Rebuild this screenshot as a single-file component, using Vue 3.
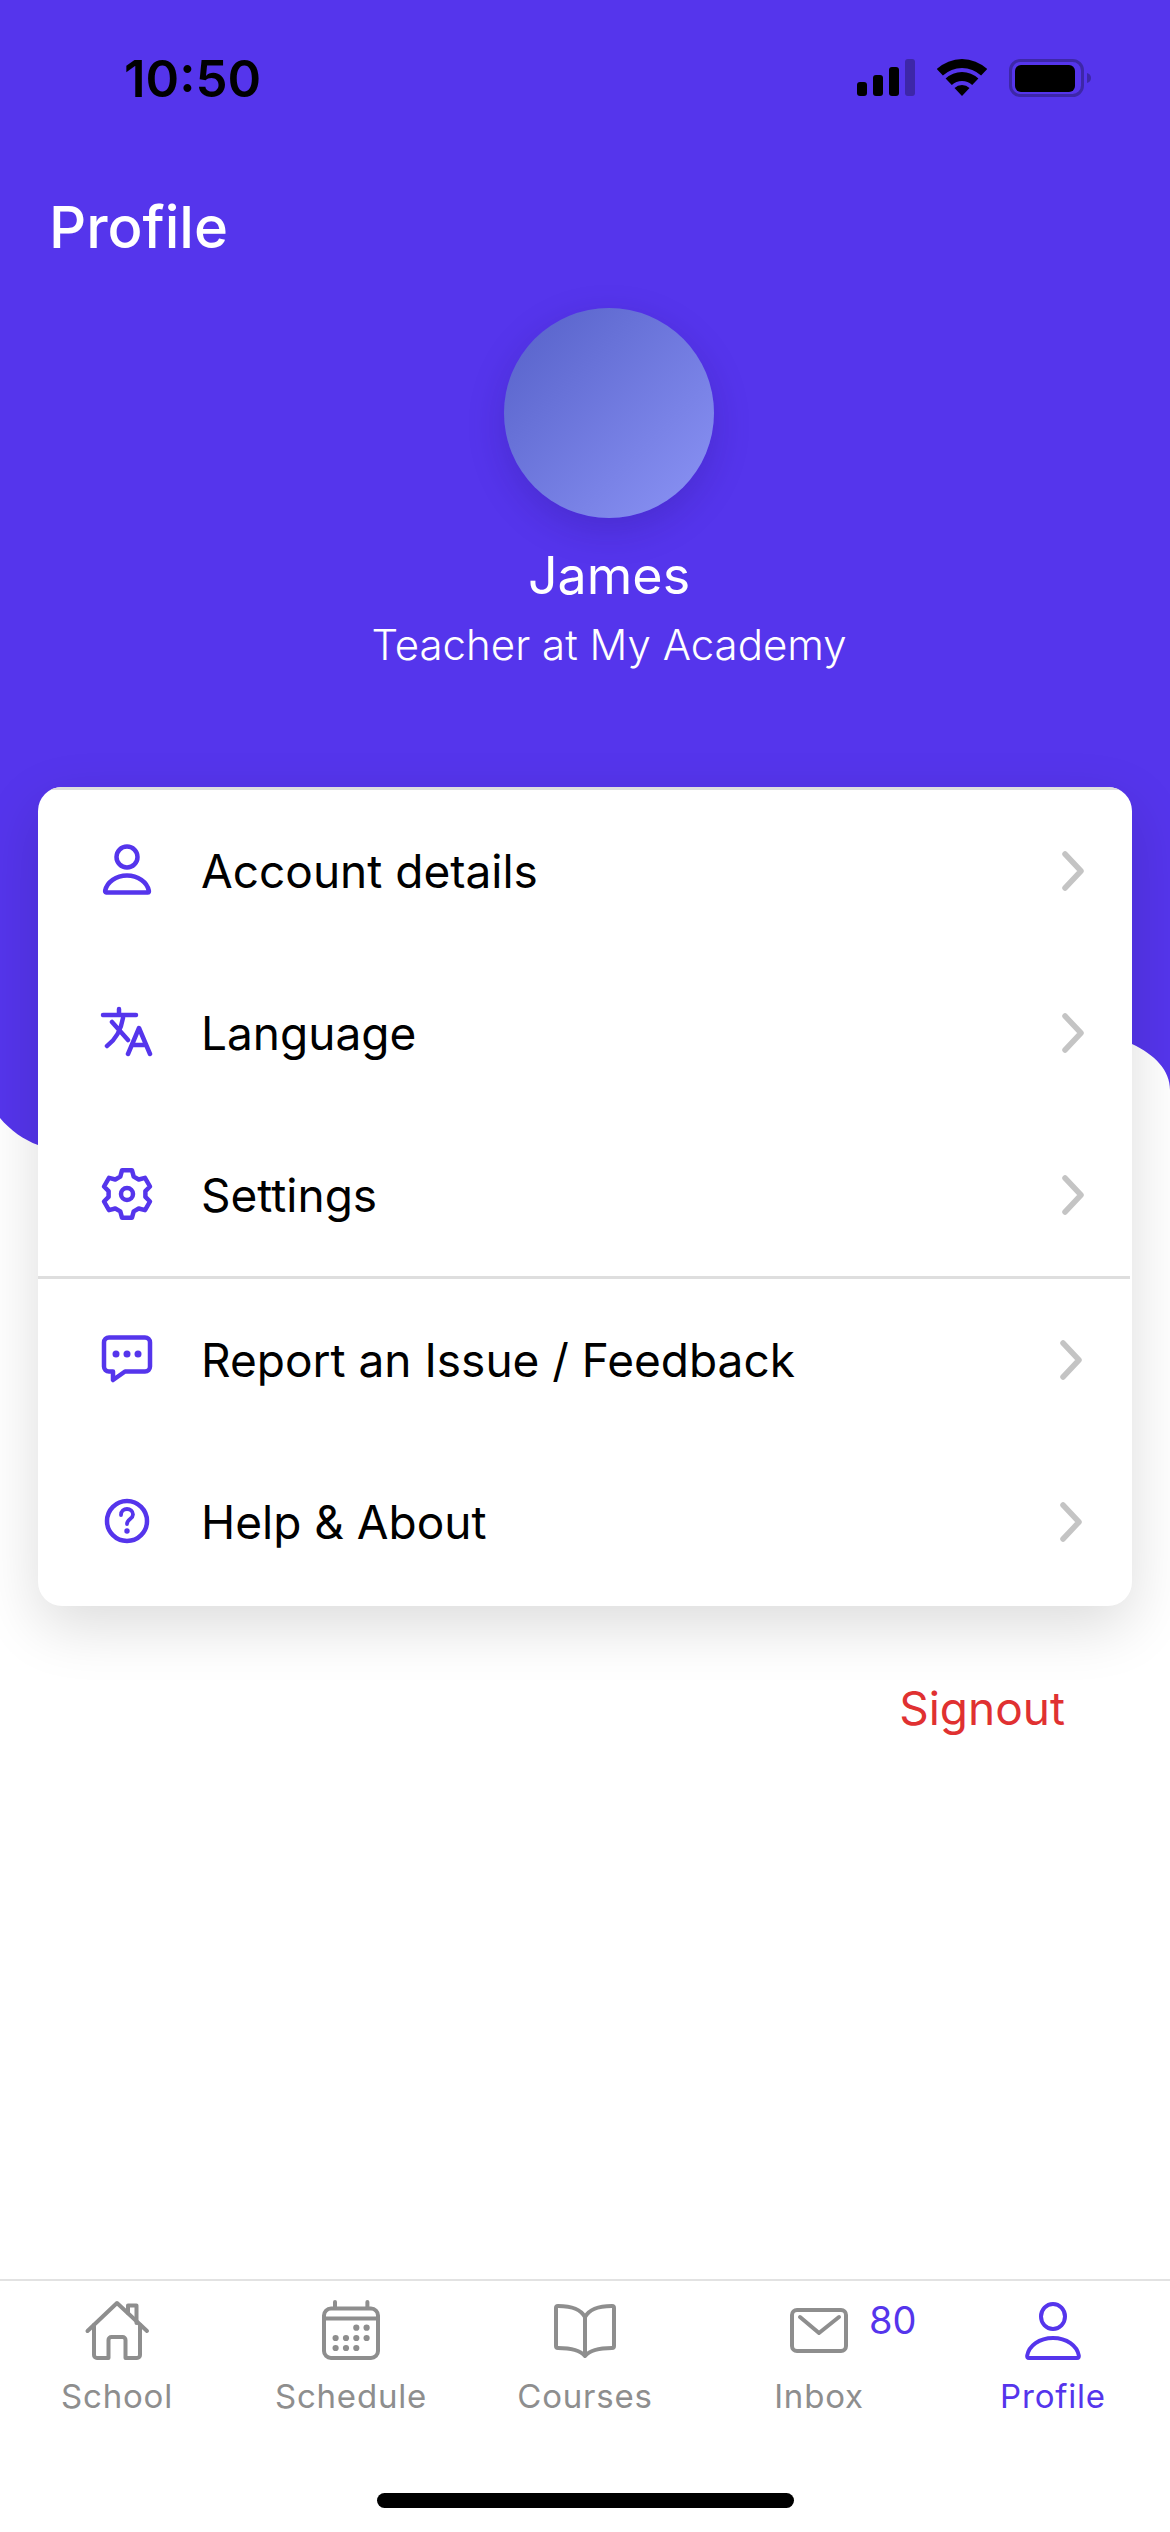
<script setup>
const menuGroups = [
  [
    { id: 'account', label: 'Account details' },
    { id: 'language', label: 'Language' },
    { id: 'settings', label: 'Settings' },
  ],
  [
    { id: 'report', label: 'Report an Issue / Feedback' },
    { id: 'help', label: 'Help & About' },
  ],
]

const tabs = [
  { id: 'school', label: 'School' },
  { id: 'schedule', label: 'Schedule' },
  { id: 'courses', label: 'Courses' },
  { id: 'inbox', label: 'Inbox', badge: 80 },
  { id: 'profile', label: 'Profile', active: true },
]

// six wide teeth, one pointing straight up
function buildGear() {
  const cx = 27
  const cy = 26
  const points = []
  for (let i = 0; i < 6; i++) {
    const a = -90 + i * 60
    const steps = [
      [-21, 18.6],
      [-12, 24.2],
      [12, 24.2],
      [21, 18.6],
    ]
    for (const [d, r] of steps) {
      const t = ((a + d) * Math.PI) / 180
      points.push(`${(cx + r * Math.cos(t)).toFixed(1)} ${(cy + r * Math.sin(t)).toFixed(1)}`)
    }
  }
  return 'M' + points.join('L') + 'Z'
}

const gearPath = buildGear()
const calendarDots = [
  [38.3, 29.7], [48.6, 29.7],
  [17.6, 40], [28, 40], [38.3, 40], [48.6, 40],
  [17.6, 50], [28, 50], [38.3, 50],
]
</script>

<template>
  <div class="screen">
    <svg class="wave" viewBox="0 0 1170 363" aria-hidden="true">
      <path d="M0 0H1170V303C1170 283 1155 268 1132 257L38 358C24 353 10 343 0 331Z" />
    </svg>

    <header class="hero">
      <div class="status-bar">
        <span class="time">10:50</span>
        <div class="status-icons">
          <svg width="58" height="37" viewBox="0 0 58 37">
            <rect x="0" y="23" width="10" height="14" rx="3" />
            <rect x="16" y="16" width="10" height="21" rx="3" />
            <rect x="32" y="8" width="10" height="29" rx="3" />
            <rect x="48" y="0" width="10" height="37" rx="3" fill="#3d27a8" />
          </svg>
          <svg width="50" height="37" viewBox="0 0 50 37">
            <path d="M-.2 10A37 37 0 0 1 50.2 10L44.1 16.5A28 28 0 0 0 5.9 16.5Z" />
            <path d="M8.6 19.5A24 24 0 0 1 41.4 19.5L35.2 26A15 15 0 0 0 14.8 26Z" />
            <path d="M17.5 29A11 11 0 0 1 32.5 29L25 37Z" />
          </svg>
          <svg width="82" height="38" viewBox="0 0 82 38">
            <rect x="1.5" y="1.5" width="72" height="35" rx="10" fill="none" stroke="#3d27a8" stroke-width="3" />
            <rect x="6" y="6" width="60" height="27" rx="6" />
            <path d="M78 14c2.500.5 4 2.500 4 5s-1.500 4.500-4 5z" fill="#3d27a8" />
          </svg>
        </div>
      </div>

      <h1 class="page-title">Profile</h1>

      <div class="user">
        <div class="avatar"></div>
        <div class="user-name">James</div>
        <div class="user-role">Teacher at My Academy</div>
      </div>
    </header>

    <section class="menu-card">
      <template v-for="(group, i) in menuGroups" :key="i">
        <div class="menu-group">
          <div v-for="item in group" :key="item.id" class="menu-row">
            <svg class="menu-icon" viewBox="0 0 54 54" fill="none">
              <template v-if="item.id === 'account'">
                <circle cx="27" cy="13" r="10.500" />
                <path d="M6 48.500h42c1 0 1-1 .8-2C47 38 38 31.500 27 31.500S7 38 5.200 46.500c-.2 1 0 2 .8 2z" />
              </template>
              <template v-else-if="item.id === 'language'">
                <path d="M3 9h33M19 3v6M12 16l16 18M23 12c-2 12-8 22-16 28M28 48l11-26 11 26M33 39h13" />
              </template>
              <template v-else-if="item.id === 'settings'">
                <path :d="gearPath" />
                <circle cx="27" cy="26" r="6" />
              </template>
              <template v-else-if="item.id === 'report'">
                <path d="M9 4.500h36a5 5 0 0 1 5 5v24a5 5 0 0 1-5 5H25L13 47v-8.500H9a5 5 0 0 1-5-5v-24a5 5 0 0 1 5-5z" />
                <circle cx="16" cy="21" r="3.500" class="dot" />
                <circle cx="27" cy="21" r="3.500" class="dot" />
                <circle cx="38" cy="21" r="3.500" class="dot" />
              </template>
              <template v-else>
                <circle cx="27" cy="26" r="20" />
                <path d="M21 20c0-4 3-6 6-6s6 2.200 6 5.500c0 4.500-6 4.500-6 9.500" class="thin" />
                <circle cx="27" cy="36" r="2.700" class="dot" />
              </template>
            </svg>
            <span class="menu-label">{{ item.label }}</span>
            <svg class="chevron" width="22" height="40" viewBox="0 0 22 40" fill="none">
              <path d="M3 3l16 17L3 37" />
            </svg>
          </div>
        </div>
      </template>
    </section>

    <button class="signout">Signout</button>

    <nav class="tab-bar">
      <div v-for="tab in tabs" :key="tab.id" class="tab" :class="{ active: tab.active }">
        <svg class="tab-icon" viewBox="0 0 66 66" fill="none">
          <template v-if="tab.id === 'school'">
            <path d="M3.500 33 33 5l30 28" />
            <path d="M10 27v30a3 3 0 0 0 3 3h11.500V42a3 3 0 0 1 3-3h11a3 3 0 0 1 3 3v18H53a3 3 0 0 0 3-3V27" />
            <path d="M44 15V7.500h8.500V25" />
          </template>
          <template v-else-if="tab.id === 'schedule'">
            <rect x="6" y="10.500" width="54" height="49.500" rx="7" />
            <path d="M6 20.500h54M17 4v6M49.400 4v6" />
            <circle v-for="(d, n) in calendarDots" :key="n" :cx="d[0]" :cy="d[1]" r="3.100" class="dot" />
          </template>
          <template v-else-if="tab.id === 'courses'">
            <path d="M33 19C29 12 22 8 6 8a2 2 0 0 0-2 2v38a2 2 0 0 0 2 2c13 0 22 2 27 8 5-6 14-8 27-8a2 2 0 0 0 2-2V10a2 2 0 0 0-2-2C44 8 37 12 33 19zM33 19v39" />
          </template>
          <template v-else-if="tab.id === 'inbox'">
            <rect x="6" y="12" width="54" height="41" rx="5" />
            <path d="M14 19l19 16 20-16" />
          </template>
          <template v-else>
            <ellipse cx="33" cy="18.500" rx="12" ry="12.500" />
            <path d="M9 60h48c1.500 0 2-1 1.800-2.500C57 48 47 40 33 40S9 48 7.200 57.500C7 59 7.500 60 9 60z" />
          </template>
        </svg>
        <span class="tab-label">{{ tab.label }}</span>
        <span v-if="tab.badge" class="tab-badge">{{ tab.badge }}</span>
      </div>
    </nav>

    <div class="home-indicator"></div>
  </div>
</template>

<style>
html,
body {
  margin: 0;
  background: #fff;
}
</style>

<style scoped>
.screen {
  position: relative;
  width: 1170px;
  height: 2532px;
  overflow: hidden;
  display: flex;
  flex-direction: column;
  background: #fff;
  font-family: Inter, 'Noto Sans', sans-serif;
}

/* the purple shape carrying on behind the card */
.wave {
  position: absolute;
  top: 787px;
  left: 0;
  width: 1170px;
  height: 363px;
}

.wave path {
  fill: #5535ec;
}

.hero {
  position: relative;
  height: 787px;
  flex-shrink: 0;
  background: #5535ec;
}

.status-bar {
  height: 118px;
  display: flex;
  align-items: flex-start;
  justify-content: space-between;
  padding: 0 79px 0 124px;
  box-sizing: border-box;
}

.time {
  margin-top: 48px;
  font-size: 51px;
  line-height: 62px;
  font-weight: 600;
  color: #000;
}

.status-icons {
  display: flex;
  gap: 22px;
  margin-top: 59px;
}

.page-title {
  margin: 75px 0 0 49px;
  font-size: 58px;
  line-height: 68px;
  font-weight: 500;
  color: #fff;
}

.user {
  display: flex;
  flex-direction: column;
  align-items: center;
  padding-left: 48px;
  margin-top: 47px;
  color: #fff;
}

.avatar {
  width: 210px;
  height: 210px;
  border-radius: 50%;
  background: linear-gradient(135deg, #5560c8, #8c94f6);
  box-shadow: 0 12px 36px rgba(30, 20, 110, 0.22);
}

.user-name {
  margin-top: 28px;
  font-size: 52px;
  line-height: 60px;
  font-weight: 400;
}

.user-role {
  margin-top: 14px;
  font-size: 42px;
  line-height: 50px;
  font-weight: 300;
}

.menu-card {
  position: relative;
  margin: 0 38px;
  padding: 3px 0;
  background: #fff;
  border-radius: 24px;
  box-shadow: 0 20px 60px rgba(0, 0, 0, 0.14);
  overflow: hidden;
}

.menu-card::before {
  content: '';
  position: absolute;
  top: 0;
  left: 0;
  right: 0;
  height: 3px;
  background: #dedede;
}

.menu-group + .menu-group {
  border-top: 3px solid #dedede;
  margin-right: 2px;
}

.menu-row {
  display: flex;
  align-items: center;
  height: 162px;
  padding: 0 48px 0 62px;
}

.menu-icon {
  width: 54px;
  height: 54px;
  flex-shrink: 0;
  overflow: visible;
}

.menu-icon * {
  stroke: #5535ec;
  stroke-width: 4.5;
  stroke-linecap: round;
  stroke-linejoin: round;
}

.menu-icon .dot {
  fill: #5535ec;
  stroke: none;
}

.menu-icon .thin {
  stroke-width: 3.8;
}

.menu-label {
  flex: 1;
  margin-left: 47px;
  font-size: 46px;
  line-height: 56px;
  color: #000;
}

.chevron path {
  stroke: #c4c4c4;
  stroke-width: 5.5;
  stroke-linecap: round;
  stroke-linejoin: round;
}

.signout {
  align-self: flex-end;
  margin: 74px 105px 0 0;
  padding: 0;
  border: 0;
  background: none;
  font-family: inherit;
  font-size: 46px;
  line-height: 56px;
  color: #e03131;
}

.tab-bar {
  margin-top: auto;
  height: 253px;
  box-sizing: border-box;
  display: grid;
  grid-template-columns: repeat(5, 234px);
  border-top: 2px solid #e2e2e2;
  padding-top: 17px;
}

.tab {
  position: relative;
  display: flex;
  flex-direction: column;
  align-items: center;
  color: #8e8e8e;
}

.tab-icon {
  width: 66px;
  height: 66px;
}

.tab-icon * {
  stroke: #8e8e8e;
  stroke-width: 4;
  stroke-linecap: round;
  stroke-linejoin: round;
}

.tab-icon .dot {
  fill: #8e8e8e;
  stroke: none;
}

.tab.active {
  color: #5535ec;
}

.tab.active .tab-icon * {
  stroke: #5535ec;
}

.tab-label {
  margin-top: 12px;
  font-size: 33px;
  line-height: 40px;
  letter-spacing: 0.8px;
}

.tab-badge {
  position: absolute;
  top: -1px;
  left: 167px;
  font-size: 38px;
  line-height: 46px;
  color: #5535ec;
}

.home-indicator {
  position: absolute;
  left: 377px;
  top: 2493px;
  width: 417px;
  height: 15px;
  border-radius: 8px;
  background: #000;
}
</style>
